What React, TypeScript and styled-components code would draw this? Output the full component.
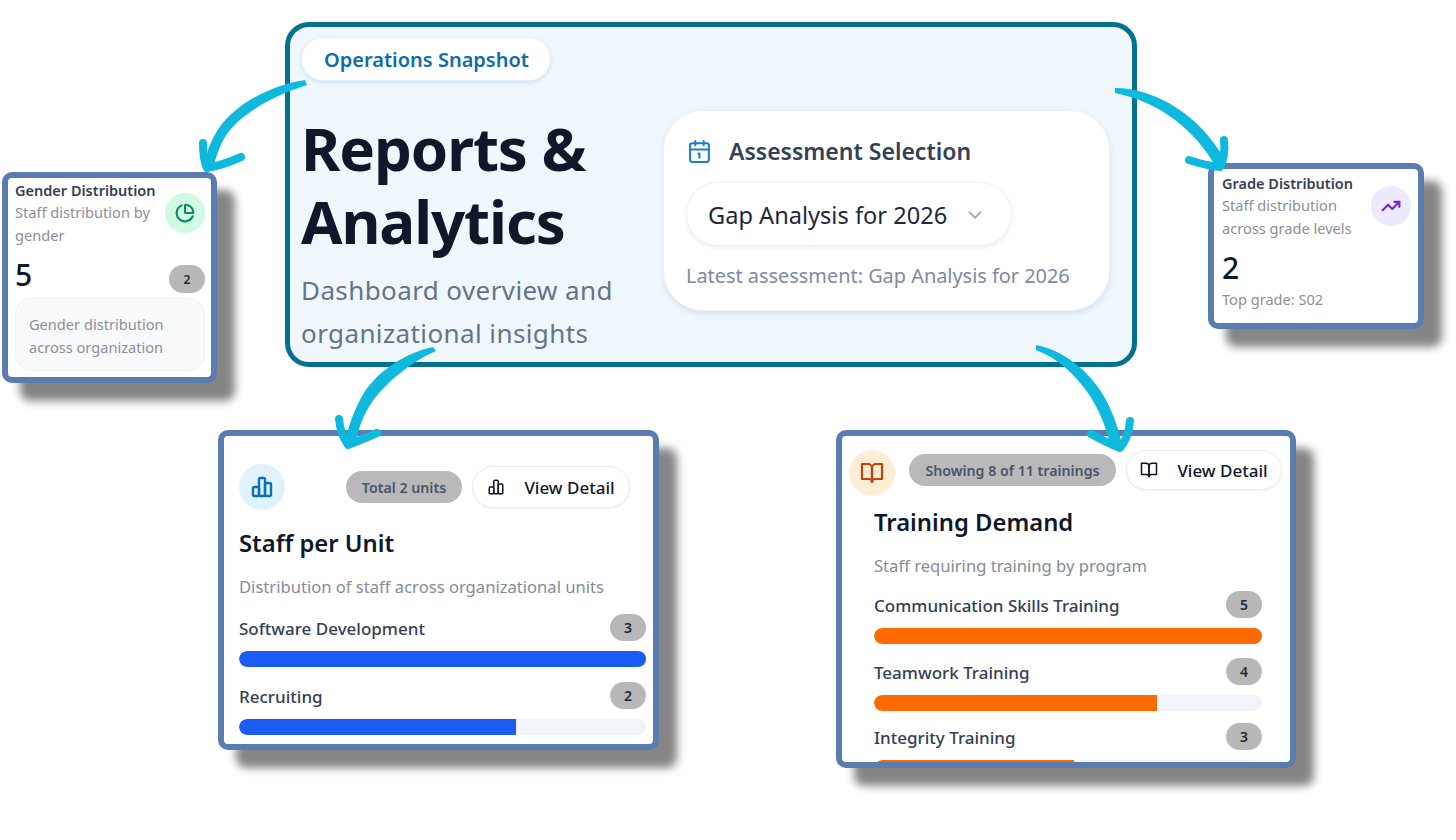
import React from "react";
import styled, { createGlobalStyle } from "styled-components";
import { Calendar1, ChartPie, TrendingUp, ChevronDown } from "lucide-react";

const Global = createGlobalStyle`
  html, body { margin: 0; padding: 0; background: #fff; }
  body { font-family: "Noto Sans", "Open Sans", "Liberation Sans", sans-serif; }
`;

const Canvas = styled.div`
  position: relative;
  width: 1456px;
  height: 840px;
  overflow: hidden;
  background: #fff;
`;

const Hero = styled.section`
  position: absolute;
  left: 285px;
  top: 22px;
  width: 852px;
  height: 345px;
  box-sizing: border-box;
  border: 5px solid #05708f;
  border-radius: 24px;
  background: #f0f8fe;
  padding: 10px 11px;
  overflow: hidden;
`;

const Pill = styled.div`
  display: inline-flex;
  align-items: center;
  height: 44px;
  box-sizing: border-box;
  padding: 0 21px 0 22px;
  border-radius: 22px;
  background: #fff;
  border: 1px solid #e3eff8;
  box-shadow: 0 2px 4px rgba(120, 160, 190, 0.25);
  color: #0f6cab;
  font-size: 20px;
  font-weight: 600;
  white-space: nowrap;
`;

const HeroBody = styled.div`
  display: flex;
  gap: 42px;
  margin-top: 29px;
`;

const HeroLeft = styled.div`
  width: 320px;
  margin-top: 2px;
  flex: none;
`;

const Title = styled.h1`
  margin: 0;
  font-size: 60px;
  line-height: 73px;
  font-weight: 700;
  letter-spacing: -1.1px;
  color: #0f172a;
`;

const Lead = styled.p`
  margin: 11px 0 0;
  font-size: 26px;
  line-height: 43px;
  letter-spacing: 0.4px;
  color: #64748b;
`;

const SelectionCard = styled.div`
  width: 447px;
  height: 201px;
  box-sizing: border-box;
  padding: 23px 22px;
  border-radius: 40px;
  background: #fff;
  border: 1px solid #edf2f7;
  box-shadow: 0 3px 6px rgba(100, 130, 160, 0.18);
`;

const SelectionHead = styled.div`
  display: flex;
  align-items: center;
  gap: 17px;
  height: 34px;
  padding-left: 1px;
  color: #334155;
  font-size: 23px;
  font-weight: 600;
  white-space: nowrap;
  svg { color: #1a7fd4; flex: none; }
`;

const SelectBox = styled.div`
  display: flex;
  align-items: center;
  justify-content: space-between;
  width: 326px;
  height: 64px;
  margin-top: 14px;
  box-sizing: border-box;
  padding: 2px 25px 0 21px;
  border-radius: 32px;
  background: #fff;
  border: 1px solid #eef1f5;
  box-shadow: 0 2px 4px rgba(100, 116, 139, 0.12);
  color: #1e293b;
  font-size: 23.6px;
  white-space: nowrap;
  svg { color: #a6adb8; flex: none; }
`;

const Latest = styled.div`
  margin-top: 16px;
  font-size: 19.9px;
  line-height: 28px;
  color: #7c8ba1;
  white-space: nowrap;
`;

const Card = styled.article<{ $x: number; $y: number; $w: number; $h: number; $p: string }>`
  position: absolute;
  left: ${(p) => p.$x}px;
  top: ${(p) => p.$y}px;
  width: ${(p) => p.$w}px;
  height: ${(p) => p.$h}px;
  box-sizing: border-box;
  padding: ${(p) => p.$p};
  border: 6px solid #5b7cb1;
  border-radius: 10px;
  background: #fff;
  box-shadow: 18px 18px 9px rgba(70, 70, 70, 0.66);
`;

const Clip = styled.div`
  position: absolute;
  inset: 0;
  overflow: hidden;
  padding: inherit;
  border-radius: 4px;
`;

const MiniHead = styled.div`
  display: flex;
  justify-content: space-between;
  align-items: center;
`;

const MiniText = styled.div`
  width: 150px;
`;

const MiniTitle = styled.div`
  font-size: 14.5px;
  line-height: 22px;
  font-weight: 600;
  color: #334155;
  white-space: nowrap;
`;

const Muted = styled.div`
  font-size: 14.6px;
  line-height: 23px;
  color: #8b9098;
`;

const Circle = styled.div<{ $size: number; $bg: string; $fg: string }>`
  display: flex;
  align-items: center;
  justify-content: center;
  flex: none;
  width: ${(p) => p.$size}px;
  height: ${(p) => p.$size}px;
  border-radius: 50%;
  background: ${(p) => p.$bg};
  color: ${(p) => p.$fg};
`;

const StatRow = styled.div`
  display: flex;
  justify-content: space-between;
  align-items: flex-end;
  margin-top: 7px;
`;

const Stat = styled.div<{ $mt?: number; $mb?: number }>`
  margin-top: ${(p) => p.$mt ?? 0}px;
  margin-bottom: ${(p) => p.$mb ?? 0}px;
  font-size: 30px;
  line-height: 40px;
  font-weight: 500;
  color: #0f172a;
`;

const Count = styled.span<{ $small?: boolean }>`
  display: flex;
  align-items: center;
  justify-content: center;
  width: 36px;
  height: ${(p) => (p.$small ? 28 : 27)}px;
  border-radius: 14px;
  background: #b8b8b8;
  color: #1f2937;
  font-size: ${(p) => (p.$small ? 12 : 14)}px;
  font-weight: 600;
  flex: none;
`;

const Note = styled.div`
  margin-top: 5px;
  height: 73px;
  box-sizing: border-box;
  padding: 14px 13px;
  border-radius: 16px;
  background: #f8fafc;
  border: 1px solid #eef1f5;
  font-size: 14.6px;
  line-height: 22.5px;
  color: #8b9098;
`;

const CardTop = styled.div`
  display: flex;
  align-items: center;
  gap: 10px;
`;

const Tag = styled.div<{ $w: number; $ml: number; $mt?: number }>`
  display: flex;
  align-items: center;
  justify-content: center;
  width: ${(p) => p.$w}px;
  height: 32px;
  margin-left: ${(p) => p.$ml}px;
  margin-top: ${(p) => p.$mt ?? 0}px;
  border-radius: 16px;
  background: #b9b9b9;
  color: #475569;
  font-size: 14.2px;
  font-weight: 600;
  white-space: nowrap;
`;

const DetailButton = styled.div<{ $w: number; $h: number; $mt?: number }>`
  display: flex;
  align-items: center;
  justify-content: center;
  gap: 19px;
  width: ${(p) => p.$w}px;
  height: ${(p) => p.$h}px;
  margin-top: ${(p) => p.$mt ?? 0}px;
  box-sizing: border-box;
  border-radius: 21px;
  background: #fff;
  border: 1px solid #e8ebf0;
  box-shadow: 0 1px 2px rgba(100, 116, 139, 0.1);
  color: #0f172a;
  font-size: 17px;
  font-weight: 500;
  white-space: nowrap;
`;

const CardTitle = styled.h2<{ $mt: number }>`
  margin: ${(p) => p.$mt}px 0 0;
  font-size: 23.8px;
  line-height: 34px;
  font-weight: 600;
  color: #0f172a;
`;

const CardSub = styled.div<{ $mt: number }>`
  margin-top: ${(p) => p.$mt}px;
  font-size: 16.6px;
  line-height: 24px;
  color: #868c96;
  white-space: nowrap;
`;

const BarRow = styled.div<{ $tight?: boolean }>`
  margin-top: ${(p) => (p.$tight ? -2 : 0)}px;
`;

const BarHead = styled.div`
  display: flex;
  justify-content: space-between;
  align-items: center;
`;

const BarLabel = styled.span`
  padding-top: 3px;
  color: #334155;
  font-size: 17px;
  line-height: 22px;
  font-weight: 500;
  white-space: nowrap;
`;

const Track = styled.div`
  height: 16px;
  margin-top: 10px;
  border-radius: 8px;
  background: #f1f5f9;
  overflow: hidden;
`;

const Fill = styled.div<{ $color: string }>`
  height: 100%;
  border-radius: 8px 0 0 8px;
  background: ${(p) => p.$color};
`;

const BarGroup = styled.div<{ $top: number; $gap: number }>`
  display: flex;
  flex-direction: column;
  gap: ${(p) => p.$gap}px;
  margin-top: ${(p) => p.$top}px;
`;

const Indented = styled.div`
  padding: 0 20px 0 25px;
`;

const Arrows = styled.svg`
  position: absolute;
  inset: 0;
  pointer-events: none;
`;

const ColumnsIcon = ({ size, weight }: { size: number; weight: number }) => (
  <svg width={size} height={size} viewBox="0 0 24 24" fill="none" stroke="currentColor" strokeWidth={weight} strokeLinecap="round" strokeLinejoin="round">
    <rect x="3" y="12" width="6" height="9" rx="1.5" />
    <rect x="9" y="3" width="6" height="18" rx="1.5" />
    <rect x="15" y="8" width="6" height="13" rx="1.5" />
  </svg>
);

const OpenBookIcon = ({ size, weight }: { size: number; weight: number }) => (
  <svg width={size} height={size} viewBox="0 0 24 24" fill="none" stroke="currentColor" strokeWidth={weight} strokeLinecap="round" strokeLinejoin="round">
    <path d="M2 3h6a4 4 0 0 1 4 4v14a3 3 0 0 0-3-3H2z" />
    <path d="M22 3h-6a4 4 0 0 0-4 4v14a3 3 0 0 1 3-3h7z" />
  </svg>
);

const Bar = ({ label, value, pct, color, tight }: { label: string; value: number; pct: number; color: string; tight?: boolean }) => (
  <BarRow $tight={tight}>
    <BarHead>
      <BarLabel>{label}</BarLabel>
      <Count>{value}</Count>
    </BarHead>
    <Track>
      <Fill $color={color} style={{ width: `${pct}%` }} />
    </Track>
  </BarRow>
);

export default function App() {
  return (
    <Canvas>
      <Global />
      <Hero>
        <Pill>Operations Snapshot</Pill>
        <HeroBody>
          <HeroLeft>
            <Title>Reports &amp; Analytics</Title>
            <Lead>Dashboard overview and organizational insights</Lead>
          </HeroLeft>
          <SelectionCard>
            <SelectionHead>
              <Calendar1 size={25} strokeWidth={2} />
              Assessment Selection
            </SelectionHead>
            <SelectBox>
              Gap Analysis for 2026
              <ChevronDown size={22} />
            </SelectBox>
            <Latest>Latest assessment: Gap Analysis for 2026</Latest>
          </SelectionCard>
        </HeroBody>
      </Hero>

      <Card $x={2} $y={172} $w={215} $h={211} $p="1px 6px 2px 7px">
        <MiniHead>
          <MiniText>
            <MiniTitle>Gender Distribution</MiniTitle>
            <Muted>Staff distribution by gender</Muted>
          </MiniText>
          <Circle $size={40} $bg="#d1fae5" $fg="#0a8a5c">
            <ChartPie size={20} strokeWidth={2.5} />
          </Circle>
        </MiniHead>
        <StatRow style={{ marginTop: 8 }}>
          <Stat $mb={-2}>5</Stat>
          <Count $small>2</Count>
        </StatRow>
        <Note>Gender distribution across organization</Note>
      </Card>

      <Card $x={1208} $y={163} $w={216} $h={166} $p="3px 7px 4px 8px">
        <MiniHead>
          <MiniText>
            <MiniTitle>Grade Distribution</MiniTitle>
            <Muted>Staff distribution across grade levels</Muted>
          </MiniText>
          <Circle $size={40} $bg="#ede9fe" $fg="#6d28d9">
            <TrendingUp size={20} strokeWidth={2.6} />
          </Circle>
        </MiniHead>
        <Stat $mt={8}>2</Stat>
        <Muted>Top grade: S02</Muted>
      </Card>

      <Card $x={218} $y={430} $w={441} $h={320} $p="28px 7px 0 15px">
        <CardTop>
          <Circle $size={46} $bg="#e0f2fe" $fg="#0b72b5">
            <ColumnsIcon size={24} weight={2.4} />
          </Circle>
          <Tag $w={116} $ml={51}>Total 2 units</Tag>
          <DetailButton $w={158} $h={42}>
            <ColumnsIcon size={18} weight={2} />
            View Detail
          </DetailButton>
        </CardTop>
        <CardTitle $mt={16}>Staff per Unit</CardTitle>
        <CardSub $mt={15}>Distribution of staff across organizational units</CardSub>
        <BarGroup $top={15} $gap={15}>
          <Bar label="Software Development" value={3} pct={100} color="#1a5cf5" />
          <Bar label="Recruiting" value={2} pct={68} color="#1a5cf5" />
        </BarGroup>
      </Card>

      <Card $x={836} $y={430} $w={460} $h={338} $p="14px 8px 0 7px">
        <Clip>
          <CardTop>
            <Circle $size={46} $bg="#ffedd5" $fg="#c2410c">
              <OpenBookIcon size={24} weight={2.2} />
            </Circle>
            <Tag $w={207} $ml={4} $mt={-6}>Showing 8 of 11 trainings</Tag>
            <DetailButton $w={156} $h={40} $mt={-6}>
              <OpenBookIcon size={18} weight={2} />
              View Detail
            </DetailButton>
          </CardTop>
          <Indented>
            <CardTitle $mt={9}>Training Demand</CardTitle>
            <CardSub $mt={15}>Staff requiring training by program</CardSub>
            <BarGroup $top={13} $gap={14}>
              <Bar label="Communication Skills Training" value={5} pct={100} color="#ff6a00" />
              <Bar label="Teamwork Training" value={4} pct={73} color="#ff6a00" />
              <Bar label="Integrity Training" value={3} pct={51.5} color="#ff6a00" tight />
            </BarGroup>
          </Indented>
        </Clip>
      </Card>

      <Arrows width="1456" height="840" viewBox="0 0 1456 840" fill="none" stroke="#0fb9de" strokeLinecap="round" strokeLinejoin="round">
        <g fill="#0fb9de" stroke="none">
          <path d="M305 80C270 85 235 105 219 128C211 140 206 152 204 168L214 165C218 150 222 140 230 130C245 112 275 95 307 85Z" />
          <path d="M1115 88C1155 88 1200 115 1225 160L1216 167C1195 130 1160 102 1115 93Z" />
          <path d="M433 347C405 353 375 372 361 398C352 415 347 430 345 446L356 443C358 428 364 414 372 402C385 384 410 362 436 351Z" />
          <path d="M1036 345C1062 350 1085 368 1100 390C1110 405 1118 425 1122 445L1110 445C1106 425 1098 408 1088 393C1075 375 1058 358 1036 350Z" />
        </g>
        <g strokeWidth="8">
          <path d="M203 143C203 153 204 162 207 168C218 166 230 162 241 157" />
          <path d="M1224 140C1225 150 1224 160 1220 167C1210 166 1198 163 1189 160" />
          <path d="M339 419C340 430 343 438 348 445C358 441 368 437 377 433" />
          <path d="M1130 421C1129 432 1126 441 1120 448C1110 444 1100 439 1091 434" />
        </g>
      </Arrows>
    </Canvas>
  );
}
